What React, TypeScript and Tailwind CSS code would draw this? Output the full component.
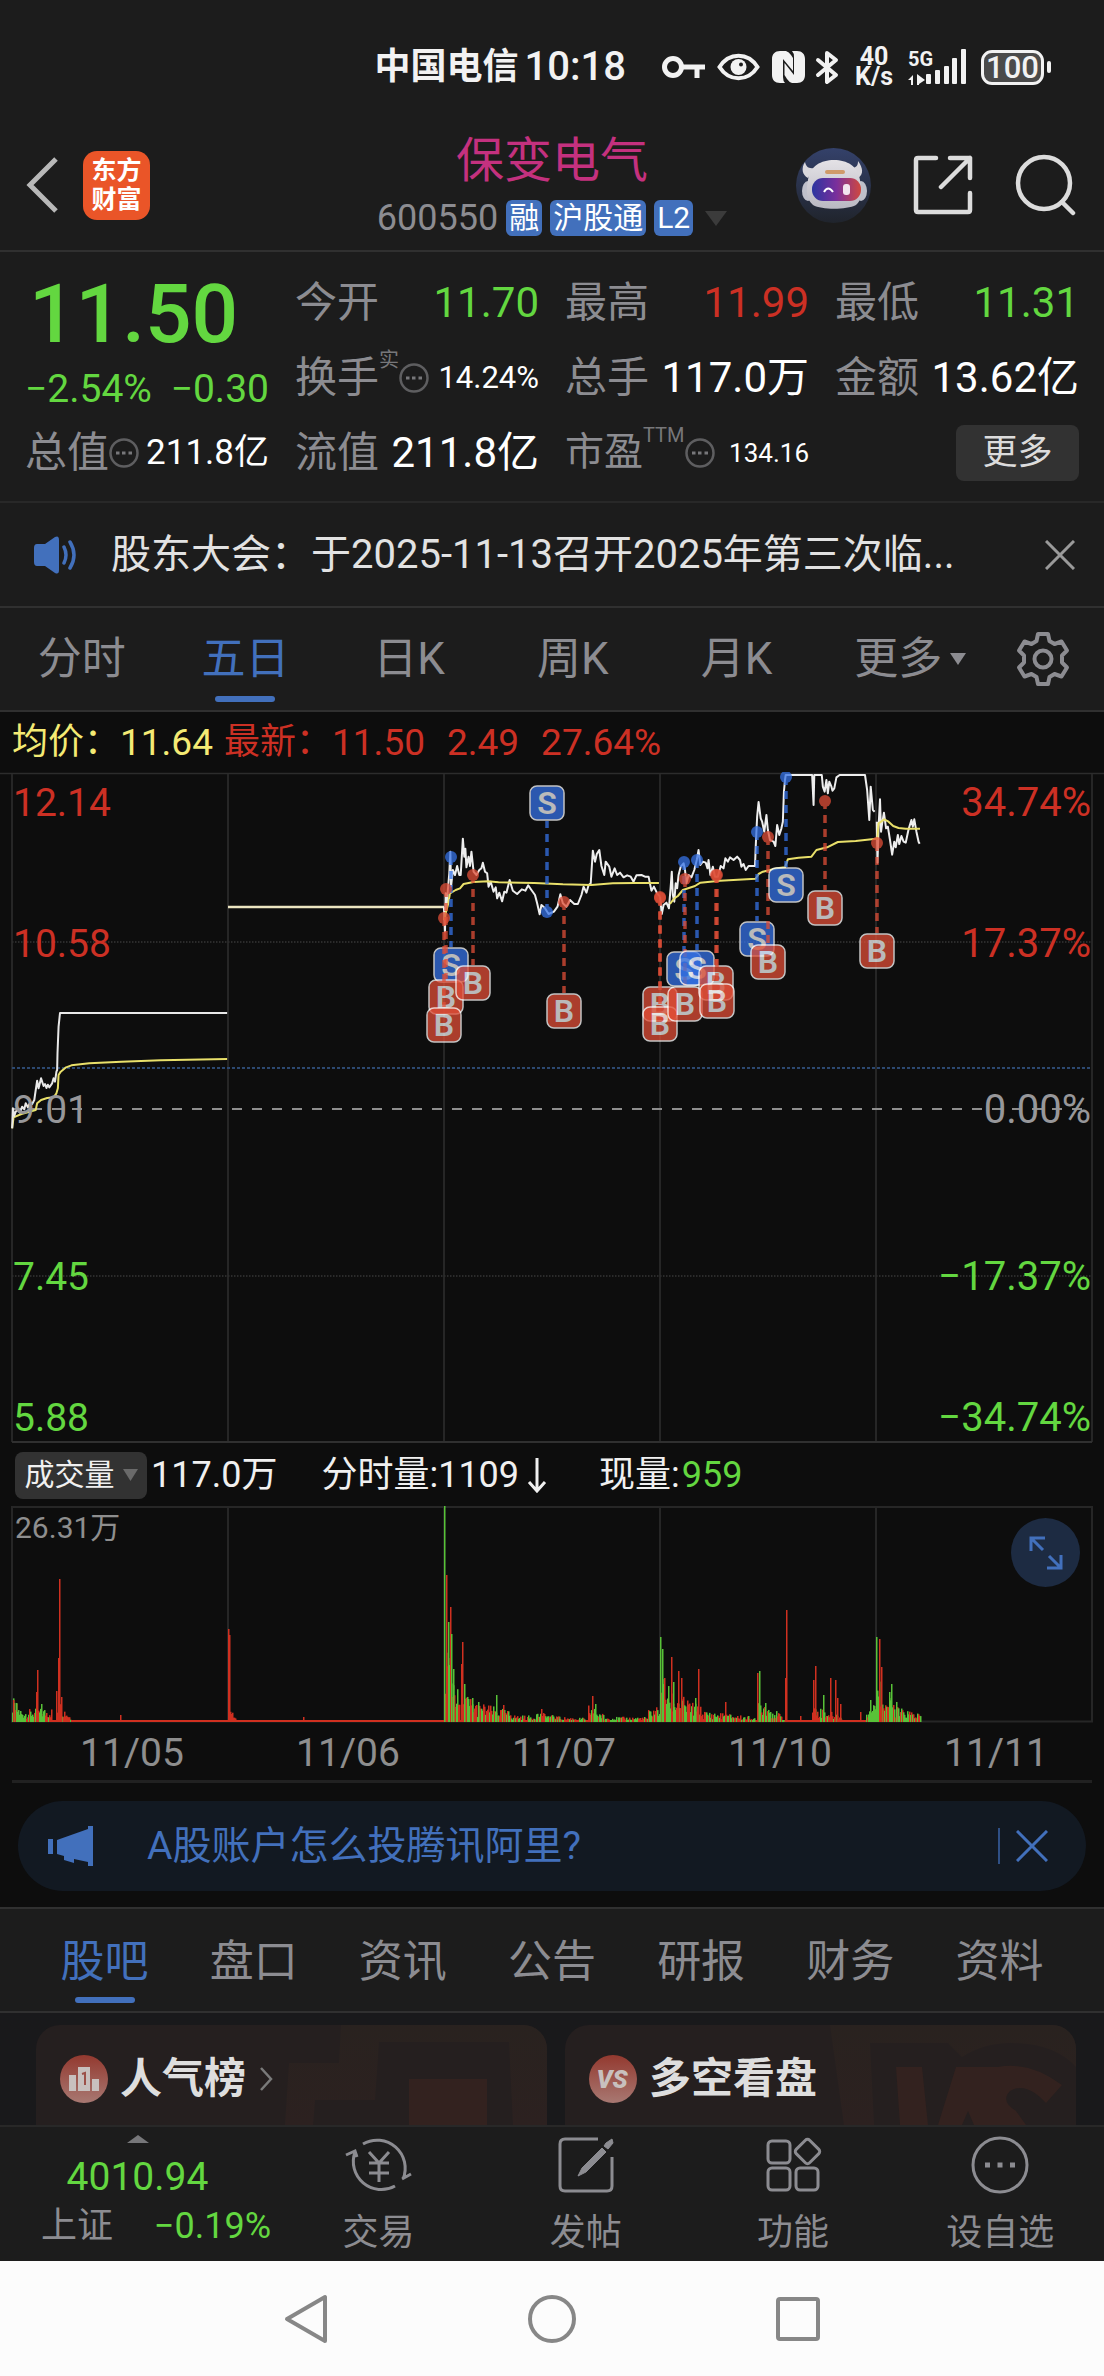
import React from "react";

const FONT = "font-[Roboto,'Noto_Sans_CJK_SC',sans-serif]";

/* ---------- status bar ---------- */

function StatusBar() {
  return (
    <div className="flex h-[134px] items-center justify-end pr-[53px] text-[#f2f2f2]">
      <span className="text-[36px] leading-none font-bold">中国电信</span>
      <span className="ml-1.5 text-[40px] leading-none font-medium">10:18</span>
      <svg className="ml-[35px] h-6 w-11" viewBox="0 0 44 24" fill="none" stroke="currentColor" strokeWidth="5">
        <circle cx="12" cy="12" r="8.5" />
        <path d="M20 12H44M36 12V23" />
      </svg>
      <svg className="ml-3 h-7 w-[43px]" viewBox="0 0 43 28">
        <path d="M2.5 14C12-1 31-1 40.500 14C31 29 12 29 2.500 14Z" fill="none" stroke="currentColor" strokeWidth="4" />
        <circle cx="21.500" cy="14" r="8" fill="currentColor" />
        <circle cx="24" cy="11.500" r="2" fill="#1c1c1c" />
      </svg>
      <svg className="ml-3 h-8 w-[33px]" viewBox="0 0 33 32">
        <path d="M8 0H14Q17 1 19 4L21 7V20L11 8V26Q11 30 13 32H8C3 32 0 29 0 24V8C0 3 3 0 8 0Z" fill="currentColor" />
        <path d="M20 0H25C30 0 33 3 33 8V24C33 29 30 32 25 32H20Q17 31 15 28L12.500 24V12L22 24V6Q22 2 20 0Z" fill="currentColor" />
      </svg>
      <svg className="ml-[10px] h-[35px] w-[24px]" viewBox="0 0 24 35" fill="none" stroke="currentColor" strokeWidth="4" strokeLinejoin="round" strokeLinecap="round">
        <path d="M3 10L21 25L12 32V3L21 10L3 25" />
      </svg>
      <span className="ml-4 flex flex-col items-center text-[25px] leading-5 font-bold">
        <span>40</span>
        <span>K/s</span>
      </span>
      <span className="ml-[15px] flex h-9 items-end">
        <span className="flex h-9 w-6 flex-col items-start justify-between">
          <span className="text-[20px] leading-5 font-bold">5G</span>
          <svg className="h-[11px] w-[17px]" viewBox="0 0 17 11" fill="currentColor">
            <path d="M0 6L5 1V11H3V6ZM9 0L17 6L11 10V11H9Z" />
          </svg>
        </span>
        <svg className="-ml-1.5 h-9 w-[41px]" viewBox="18 0 41 36" fill="currentColor">
          <rect x="18" y="25" width="5" height="10" rx="1" />
          <rect x="27" y="21" width="5" height="14" rx="1" />
          <rect x="36" y="17" width="5" height="18" rx="1" />
          <rect x="44" y="9" width="5" height="26" rx="1" />
          <rect x="53" y="0" width="5" height="35" rx="1" />
        </svg>
      </span>
      <span className="ml-[14px] flex h-[35px] w-[63px] items-center justify-center rounded-[11px] border-[3px] border-current bg-[#4a4a4a] text-[31px] leading-none font-medium">
        100
      </span>
      <span className="ml-[3px] h-3 w-1 rounded-full bg-current" />
    </div>
  );
}

/* ---------- title bar ---------- */

function Robot() {
  return (
    <svg className="h-[75px] w-[75px]" viewBox="0 0 75 75">
      <defs>
        <linearGradient id="sky" x1="0" y1="0" x2="0" y2="1">
          <stop offset="0" stopColor="#34416a" />
          <stop offset="1" stopColor="#20242c" />
        </linearGradient>
        <linearGradient id="visor" x1="0" y1="0" x2="1" y2="0">
          <stop offset="0" stopColor="#2b35a0" />
          <stop offset="0.5" stopColor="#7a2f9c" />
          <stop offset="1" stopColor="#d0493f" />
        </linearGradient>
        <linearGradient id="shell" x1="0" y1="0" x2="0" y2="1">
          <stop offset="0" stopColor="#e4e2e6" />
          <stop offset="1" stopColor="#b9b8c2" />
        </linearGradient>
      </defs>
      <circle cx="37.500" cy="37.500" r="37.500" fill="url(#sky)" />
      <path d="M9 14C5 20 6 27 12 30L18 20C12 21 10 18 9 14ZM62 13C67 20 68 26 62 30L55 20C61 20 62 17 62 13Z" fill="#d9d7dc" />
      <ellipse cx="12" cy="43" rx="6" ry="10" fill="#bfc0cb" />
      <ellipse cx="65" cy="43" rx="6" ry="10" fill="#bfc0cb" />
      <path d="M12 32C14 18 25 12 38 12S62 18 64 32C66 44 66 52 60 57C50 62 26 62 17 57C10 51 10 42 12 32Z" fill="url(#shell)" />
      <rect x="29" y="22" width="20" height="4" rx="2" fill="#cf9a6a" />
      <rect x="16" y="30" width="49" height="23" rx="11" fill="url(#visor)" />
      <path d="M28 44Q32 37 37 44" fill="none" stroke="#fff" strokeWidth="2" />
      <rect x="47" y="36" width="7" height="11" rx="3" fill="#f2e4ee" />
    </svg>
  );
}

function TitleBar() {
  return (
    <header className="grid grid-cols-[1fr_auto_1fr] items-start border-b-2 border-[#303030] pb-[14px]">
      <div className="flex h-[102px] items-center pl-6">
        <button aria-label="返回">
          <svg className="h-[58px] w-[36px]" viewBox="0 0 36 58" fill="none" stroke="#b8b8b8" strokeWidth="5">
            <path d="M32 3L6 29L32 55" />
          </svg>
        </button>
        <div className="ml-[23px] flex h-[69px] w-[67px] flex-col items-center justify-center rounded-[14px] bg-[#ea5528] text-[25px] leading-[29px] font-bold text-white">
          <span>东方</span>
          <span>财富</span>
        </div>
      </div>
      <div className="flex flex-col items-center gap-3">
        <h1 className="text-[48px] leading-[54px] text-[#c4317f]">保变电气</h1>
        <button className="flex h-9 items-center gap-2 text-[30px] leading-none text-white">
          <span className="text-[36px] text-[#8c8c91]">600550</span>
          <span className="rounded-md bg-[#4270bc] px-[3px] py-[3px]">融</span>
          <span className="rounded-md bg-[#4270bc] px-[3px] py-[3px]">沪股通</span>
          <span className="rounded-md bg-[#4270bc] px-[3px] py-[3px]">L2</span>
          <svg className="ml-1 h-[15px] w-[22px]" viewBox="0 0 22 15">
            <path d="M0 0H22L11 15Z" fill="#3b3b3b" />
          </svg>
        </button>
      </div>
      <div className="flex h-[102px] items-center justify-end gap-[42px] pr-[27px]">
        <button aria-label="助手"><Robot /></button>
        <button aria-label="分享">
          <svg className="h-[60px] w-[60px]" viewBox="0 0 60 60" fill="none" stroke="#dcdcdc" strokeWidth="4.500" strokeLinecap="round" strokeLinejoin="round">
            <path d="M23 3H5Q3 3 3 5V55Q3 57 5 57H55Q57 57 57 55V38M37 3H57V23M57 3L28 32" />
          </svg>
        </button>
        <button aria-label="搜索">
          <svg className="h-[62px] w-[62px]" viewBox="0 0 62 62" fill="none" stroke="#dcdcdc" strokeWidth="4.500" strokeLinecap="round">
            <circle cx="29" cy="29" r="26" />
            <path d="M47 48L58 59" />
          </svg>
        </button>
      </div>
    </header>
  );
}

/* ---------- quote summary ---------- */

const GREEN = "text-[#63d740]";
const RED = "text-[#cc3024]";

function Dots() {
  return (
    <svg className="h-[30px] w-[30px] shrink-0" viewBox="0 0 30 30">
      <circle cx="15" cy="15" r="13.500" fill="none" stroke="#5e5e60" strokeWidth="2.500" />
      <path d="M7 13.500h3.500v3H7zM13 13.500h3.500v3H13zM19.500 13.500H23v3h-3.500z" fill="#77777a" />
    </svg>
  );
}

type StatProps = { label: string; value: string; color?: string; size?: string; sup?: string; dots?: boolean };

function Stat({ label, value, color = "text-white", size = "text-[42px]", sup, dots }: StatProps) {
  return (
    <div className="flex h-[75px] items-center leading-none whitespace-nowrap">
      <span className={(sup === "TTM" ? "text-[39px]" : "text-[42px]") + " text-[#8c8c91]"}>{label}</span>
      {sup && <span className="mb-9 text-[20px] text-[#77777a]">{sup}</span>}
      {dots && <Dots />}
      <span className={"ml-auto " + size + " " + color}>{value}</span>
    </div>
  );
}

function Summary() {
  return (
    <section className="grid grid-cols-4 gap-x-[26px] border-b-2 border-[#282828] px-[25px] pt-[13px] pb-[11px]">
      <div className="row-span-2 flex h-[150px] flex-col leading-none whitespace-nowrap">
        <div className={"pl-1 text-[82px] leading-[98px] font-medium " + GREEN}>11.50</div>
        <div className={"flex justify-between text-[39px] leading-[52px] " + GREEN}>
          <span>−2.54%</span>
          <span>−0.30</span>
        </div>
      </div>
      <Stat label="今开" value="11.70" color={GREEN} />
      <Stat label="最高" value="11.99" color={RED} />
      <Stat label="最低" value="11.31" color={GREEN} />
      <Stat label="换手" value="14.24%" size="text-[31px]" sup="实" dots />
      <Stat label="总手" value="117.0万" />
      <Stat label="金额" value="13.62亿" />
      <Stat label="总值" value="211.8亿" size="text-[35px]" dots />
      <Stat label="流值" value="211.8亿" />
      <Stat label="市盈" value="134.16" size="text-[26px]" sup="TTM" dots />
      <div className="flex h-[75px] items-center justify-end">
        <button className="h-14 w-[123px] rounded-lg bg-[#323232] text-[35px] leading-none text-[#dcdcdc]">更多</button>
      </div>
    </section>
  );
}

/* ---------- notice and period tabs ---------- */

function Notice() {
  return (
    <div className="flex h-[105px] items-center border-b-2 border-[#303030] pr-[29px] pl-[33px]">
      <svg className="h-[38px] w-[46px] shrink-0" viewBox="0 0 46 38" fill="#4270bc">
        <path d="M4 8H12L22 1Q26 -1 26 4V34Q26 39 22 37L12 30H4Q1 30 1 26V12Q1 8 4 8Z" />
        <path d="M31 11Q35 19 31 27M37 6Q45 19 37 32" fill="none" stroke="#4270bc" strokeWidth="3.500" strokeLinecap="round" />
      </svg>
      <a href="#notice" className="ml-8 min-w-0 flex-1 text-[40px] leading-none whitespace-nowrap text-[#e2e2e2]">
        股东大会：于2025-11-13召开2025年第三次临...
      </a>
      <button aria-label="关闭">
        <svg className="h-[30px] w-[30px]" viewBox="0 0 30 30" stroke="#9a9a9a" strokeWidth="3">
          <path d="M1 1L29 29M29 1L1 29" />
        </svg>
      </button>
    </div>
  );
}

function PeriodTabs() {
  const tabs = ["分时", "五日", "日K", "周K", "月K", "更多"];
  return (
    <nav className="flex h-[104px] items-center border-b-2 border-[#303030]">
      <div className="grid h-full flex-1 grid-cols-6">
        {tabs.map((t) => {
          const on = t === "五日";
          return (
            <button
              key={t}
              className={"relative flex h-full items-center justify-center text-[44px] leading-none whitespace-nowrap " + (on ? "text-[#4270bc]" : "text-[#8c8c91]") + (t === "更多" ? " pl-5" : "")}
            >
              {t}
              {t === "更多" && (
                <svg className="ml-2 h-3 w-4 shrink-0" viewBox="0 0 16 12">
                  <path d="M0 0H16L8 12Z" fill="currentColor" />
                </svg>
              )}
              {on && <span className="absolute bottom-2 h-1.5 w-[60px] rounded-full bg-[#4270bc]" />}
            </button>
          );
        })}
      </div>
      <button aria-label="设置" className="flex w-[122px] justify-center">
        <svg className="h-[54px] w-[54px]" viewBox="0 0 54 54" fill="none" stroke="#8c8c91" strokeWidth="4" strokeLinejoin="round">
          <path d="M22 2H32L33.500 9L38.500 12L45.500 9.500L51 18.500L46 23.500V30.500L51 35.500L45.500 44.500L38.500 42L33.500 45L32 52H22L20.500 45L15.500 42L8.500 44.500L3 35.500L8 30.500V23.500L3 18.500L8.500 9.500L15.500 12L20.500 9Z" />
          <circle cx="27" cy="27" r="8.500" />
        </svg>
      </button>
    </nav>
  );
}

/* ---------- price chart ---------- */

const DAY1_PRICE =
  "34,1105 36,1045 40,1068 44,1055 50,1050 56,1058 62,1040 68,1048 72,1030 78,1042 84,1028 90,1032 96,1020 98,1005 104,962 108,985 115,955 122,978 126,972 130,984 134,974 138,982 146,970 150,955 154,965 158,935 160,930 161,880 164,800 168,759 636,759";
const DAY1_AVG =
  "34,1105 38,1072 60,1062 100,1050 104,1030 115,1020 132,1014 150,1012 158,1000 162,985 164,945 170,935 185,922 200,916 250,910 340,905 450,901 636,897";
const DAY3_PRICE =
  "67,440 70,515 72,400 75,440 78,390 82,340 85,275 87,380 92,330 98,345 104,318 110,345 114,345 120,236 124,290 127,266 130,322 136,290 140,318 144,275 150,335 158,345 166,330 172,325 176,308 182,335 188,340 192,380 198,365 206,395 212,382 216,415 222,398 230,424 236,395 242,398 251,360 260,392 272,402 285,388 295,392 303,376 312,390 322,405 328,430 335,463 340,435 350,445 360,462 375,455 385,440 393,403 400,430 410,440 420,420 432,432 442,432 452,405 458,380 466,398 472,376 478,370 484,272 490,305 495,282 502,270 508,318 516,345 520,305 530,320 536,350 545,325 552,345 560,338 570,352 580,346 590,350 598,365 606,346 620,345 630,350 640,350 648,392 655,380 664,400 672,410";
const DAY3_AVG =
  "67,480 78,435 84,400 100,390 112,385 122,372 150,366 190,364 220,367 320,369 400,373 480,375 540,370 600,369 669,369";
const DAY4_PRICE =
  "672,410 677,462 682,435 690,428 697,445 702,380 705,335 708,405 712,425 716,370 720,385 724,345 730,320 738,310 742,330 746,370 752,345 760,352 768,330 775,300 780,270 785,315 792,305 800,308 805,325 808,300 813,345 820,320 826,350 834,350 842,318 850,325 855,295 862,305 868,292 878,300 888,290 896,300 900,320 906,312 912,330 920,318 930,318 938,318 940,260 944,170 948,126 954,175 958,185 964,215 970,165 974,210 980,240 990,245 995,258 1000,195 1006,225 1012,205 1016,185 1019,95 1022,60 1024,45 1098,45 1102,135 1104,45 1125,45 1128,80 1133,95 1138,60 1142,100 1146,65 1152,80 1155,92 1160,85 1166,52 1175,45 1246,45 1252,90 1258,180 1262,80 1268,150 1273,155";
const DAY4_AVG =
  "700,432 712,415 722,408 736,390 770,378 785,368 840,362 940,356 948,342 960,335 1000,325 1022,322 1030,298 1060,293 1096,290 1110,270 1140,262 1170,246 1220,243 1277,236";
const DAY5_PRICE =
  "1279,185 1281,308 1284,200 1288,118 1291,215 1294,190 1299,158 1305,205 1310,200 1316,240 1322,284 1328,245 1332,262 1338,225 1342,252 1348,228 1354,245 1360,248 1368,208 1376,180 1380,200 1384,178 1390,215 1396,245 1399,251";
const DAY5_AVG = "1280,240 1284,190 1300,178 1312,185 1325,198 1340,204 1360,206 1400,206";

/* kind, x, trade point y, tag centre y */
const TRADES: [string, number, number, number][] = [
  ["S", 451, 857, 965],
  ["B", 446, 889, 997],
  ["B", 444, 918, 1025],
  ["B", 473, 875, 983],
  ["S", 547, 912, 803],
  ["B", 564, 902, 1011],
  ["B", 660, 897, 1004],
  ["B", 660, 898, 1024],
  ["S", 684, 862, 969],
  ["B", 685, 879, 1004],
  ["S", 697, 860, 968],
  ["B", 716, 875, 983],
  ["B", 717, 875, 1001],
  ["S", 757, 832, 939],
  ["B", 768, 837, 962],
  ["S", 786, 777, 885],
  ["B", 825, 801, 908],
  ["B", 877, 843, 951],
];

function Line({ points, color }: { points: string; color: string }) {
  return (
    <polyline points={points} fill="none" stroke={color} strokeWidth="2" strokeLinejoin="round" vectorEffect="non-scaling-stroke" />
  );
}

function PriceChart() {
  const axis: [string, string, number, string][] = [
    ["12.14", "34.74%", 816, "#cc3024"],
    ["10.58", "17.37%", 957, "#cc3024"],
    ["9.01", "0.00%", 1123, "#97979a"],
    ["7.45", "−17.37%", 1290, "#63d740"],
    ["5.88", "−34.74%", 1431, "#63d740"],
  ];
  return (
    <svg className="block h-auto w-full" viewBox="0 772 1104 672">
      <path d="M0 773.500H1104" stroke="#2c2c2c" strokeWidth="1.500" />
      <path d="M12 774V1442M228 774V1442M444 774V1442M660 774V1442M876 774V1442M1092 774V1442" stroke="#262626" strokeWidth="2" />
      <path d="M12 1442H1092" stroke="#303030" strokeWidth="2" />
      <path d="M12 942H1092M12 1276H1092" stroke="#2b2b2b" strokeWidth="2" strokeDasharray="1.500 1.500" />
      <path d="M12 1068H1092" stroke="#2c4870" strokeWidth="2" strokeDasharray="3 2" />
      <path d="M12 1109H1092" stroke="#8e8e8e" strokeWidth="2" strokeDasharray="10 10" />
      <g transform="translate(0 760) scale(0.35714 0.33333)">
        <Line points={DAY1_AVG} color="#e9e06a" />
        <Line points={DAY1_PRICE} color="#e8e8e8" />
      </g>
      <path d="M228 907H444" stroke="#ebe4c0" strokeWidth="2.500" />
      <g transform="translate(420 760) scale(0.35714 0.33333)">
        <Line points={DAY3_PRICE} color="#eeeeee" />
        <Line points={DAY3_AVG} color="#e9e06a" />
        <Line points={DAY4_PRICE} color="#eeeeee" />
        <Line points={DAY4_AVG} color="#e9e06a" />
        <Line points={DAY5_PRICE} color="#eeeeee" />
        <Line points={DAY5_AVG} color="#e9e06a" />
      </g>
      {axis.map(([left, right, y, fill]) => (
        <g key={left} fill={fill}>
          <text x="13" y={y} fontSize="39">{left}</text>
          <text x="1091" y={y} fontSize="40" textAnchor="end">{right}</text>
        </g>
      ))}
      {TRADES.map(([kind, x, point, tag], i) => {
        const fill = kind === "S" ? "#3572e6" : "#e04e37";
        return (
          <g key={i} opacity="0.75">
            <path d={`M${x} ${point}V${tag > point ? tag - 18 : tag + 18}`} stroke={fill} strokeWidth="3.500" strokeDasharray="8 6" />
            <circle cx={x} cy={point} r="6" fill={fill} />
            <rect x={x - 17} y={tag - 17} width="34" height="34" rx="7" fill={fill} stroke="#fff" strokeWidth="1.500" />
            <text x={x} y={tag + 11} textAnchor="middle" fontSize="32" fontWeight="600" fill="#f4f4f4">
              {kind}
            </text>
          </g>
        );
      })}
    </svg>
  );
}

/* ---------- volume chart ---------- */

/* x start, x end, start height, end height, share of green bars */
const VOLUME_BANDS: [number, number, number, number, number][] = [
  [12, 22, 24, 10, 0.5],
  [22, 52, 12, 14, 0.35],
  [57, 72, 24, 3, 0.2],
  [230, 236, 18, 2, 0],
  [445, 460, 90, 18, 0.5],
  [461, 482, 32, 14, 0.6],
  [482, 512, 18, 10, 0.55],
  [512, 585, 7, 4, 0.5],
  [536, 560, 10, 5, 0.5],
  [588, 604, 17, 7, 0.5],
  [604, 648, 5, 5, 0.5],
  [648, 660, 12, 18, 0.7],
  [661, 676, 46, 22, 0.55],
  [676, 702, 28, 14, 0.5],
  [702, 755, 11, 5, 0.5],
  [757, 784, 26, 4, 0.6],
  [812, 842, 17, 6, 0.3],
  [866, 876, 13, 26, 0.6],
  [877, 884, 60, 28, 0.5],
  [884, 898, 28, 14, 0.6],
  [898, 921, 14, 8, 0.65],
];

const VOLUME_PEAKS: [number, number, string][] = [
  [13, 22, "r"], [16, 19, "g"], [36, 30, "r"], [37, 52, "r"], [41, 18, "g"], [56, 31, "r"], [58, 64, "r"], [59, 143, "r"], [61, 25, "r"],
  [120, 7, "r"], [228, 93, "r"], [229, 87, "r"], [303, 5, "r"], [444, 216, "g"], [446, 147, "r"], [448, 100, "g"],
  [450, 115, "r"], [451, 88, "g"], [453, 53, "g"], [461, 58, "r"], [462, 80, "r"], [464, 38, "g"], [472, 24, "g"],
  [478, 20, "g"], [496, 27, "g"], [503, 17, "r"], [541, 13, "r"], [592, 26, "r"], [595, 18, "g"], [660, 85, "g"], [662, 73, "g"],
  [664, 44, "r"], [671, 65, "r"], [673, 40, "g"], [678, 51, "r"], [681, 44, "r"], [695, 24, "g"], [698, 53, "r"],
  [725, 20, "r"], [757, 49, "r"], [759, 51, "g"], [765, 19, "g"], [785, 44, "r"], [786, 112, "r"], [800, 6, "r"], [813, 42, "r"],
  [815, 56, "r"], [823, 27, "g"], [830, 44, "r"], [835, 42, "r"], [837, 24, "r"], [840, 18, "r"], [860, 10, "r"],
  [870, 22, "g"], [876, 85, "g"], [879, 83, "r"], [881, 55, "r"], [889, 30, "g"], [891, 38, "g"], [896, 20, "g"],
];

function noise(n: number) {
  const v = Math.sin(n * 12.9898) * 43758.5453;
  return v - Math.floor(v);
}

const VOLUME_BARS: [number, number, string][] = [];
VOLUME_BANDS.forEach(([from, to, start, end, green], band) => {
  for (let x = from; x < to; x += 1) {
    const height = start + ((end - start) * (x - from)) / (to - from);
    VOLUME_BARS.push([x, Math.max(2, height * (0.25 + 0.8 * noise(x + band))), noise(x * 3 + 7) < green ? "g" : "r"]);
  }
});
VOLUME_BARS.push(...VOLUME_PEAKS);

function VolumeChart() {
  return (
    <div className="relative">
      <svg className="block h-auto w-full" viewBox="0 1506 1104 217">
        <path d="M12 1507H1092V1721.500H12ZM228 1507V1722M444 1507V1722M660 1507V1722M876 1507V1722" fill="none" stroke="#262626" strokeWidth="2" />
        <path d="M12 1721H920" stroke="#d03020" strokeWidth="2" />
        {VOLUME_BARS.map(([x, h, c], i) => (
          <rect key={i} x={x} y={1722 - h} width="1.500" height={h} fill={c === "g" ? "#58c238" : "#d03020"} />
        ))}
        <text x="15" y="1538" fontSize="30" fill="#8e8e8e">26.31万</text>
      </svg>
      <button aria-label="全屏" className="absolute top-3 right-6 flex h-[69px] w-[69px] items-center justify-center rounded-full bg-[#1d2b42]">
        <svg className="h-[34px] w-[34px]" viewBox="0 0 34 34" fill="none" stroke="#4270bc" strokeWidth="3">
          <path d="M2 15V2H16M2 2L14 14M32 19V32H18M32 32L20 20" />
        </svg>
      </button>
    </div>
  );
}

function ChartPanel() {
  return (
    <section className="bg-[#0d0d0d]">
      <div className="flex h-[60px] items-center pl-3 text-[36px] leading-none whitespace-nowrap">
        <span className="flex items-center text-[#f4ea74]">
          均价：<span className="w-[104px] text-[37px]">11.64</span>
        </span>
        <span className={"flex items-center " + RED}>
          最新：<span className="flex gap-[22px] text-[37px]"><span>11.50</span><span>2.49</span><span>27.64%</span></span>
        </span>
      </div>
      <PriceChart />
      <div className="flex h-[62px] items-center pl-[15px] text-[36px] leading-none whitespace-nowrap text-[#f0f0f0]">
        <button className="flex h-[47px] w-[132px] items-center justify-center gap-2 rounded-lg bg-[#323232] text-[30px]">
          成交量
          <svg className="h-3 w-[15px]" viewBox="0 0 15 12">
            <path d="M0 0H15L7.500 12Z" fill="#6a6a6a" />
          </svg>
        </button>
        <span className="ml-1">117.0万</span>
        <span className="ml-11 flex items-center">
          分时量:1109
          <svg className="ml-2 h-9 w-5" viewBox="0 0 20 36" fill="none" stroke="currentColor" strokeWidth="3">
            <path d="M10 1V34M2 25L10 34L18 25" />
          </svg>
        </span>
        <span className="ml-[52px] flex items-center">现量:<span className={"ml-0.5 " + GREEN}>959</span></span>
      </div>
      <VolumeChart />
      <div className="grid h-[57px] grid-cols-5 items-center pt-1 pl-6 text-center text-[39px] leading-none text-[#8e8e8e]">
        {["11/05", "11/06", "11/07", "11/10", "11/11"].map((d) => (
          <span key={d}>{d}</span>
        ))}
      </div>
      <div className="mx-3 h-[3px] bg-[#212121]" />
      <div className="px-[18px] pt-[18px] pb-4">
        <div className="flex h-[90px] items-center rounded-full bg-[#121922] pr-[38px] pl-[30px] text-[#4270bc]">
          <svg className="h-10 w-[46px] shrink-0" viewBox="0 0 46 40" fill="currentColor">
            <path d="M0 13H5V28H0ZM9 14L40 3V0H45V40H40V36L26 33V37L16 34V30L9 28Z" />
          </svg>
          <a href="#promo" className="ml-[53px] flex-1 text-[39px] leading-none whitespace-nowrap">A股账户怎么投腾讯阿里?</a>
          <span className="h-9 w-0.5 bg-[#2f5086]" />
          <button aria-label="关闭" className="ml-4">
            <svg className="h-8 w-8" viewBox="0 0 32 32" stroke="currentColor" strokeWidth="3">
              <path d="M1 1L31 31M31 1L1 31" />
            </svg>
          </button>
        </div>
      </div>
    </section>
  );
}

/* ---------- content tabs and cards ---------- */

function ContentTabs() {
  const tabs = ["股吧", "盘口", "资讯", "公告", "研报", "财务", "资料"];
  return (
    <nav className="flex h-[106px] items-center border-y-2 border-[#303030] px-[30px]">
      {tabs.map((t, i) => (
        <button
          key={t}
          className={"relative flex h-full flex-1 items-center justify-center pt-1 text-[44px] leading-none " + (i === 0 ? "text-[#4270bc]" : "text-[#8c8c91]")}
        >
          {t}
          {i === 0 && <span className="absolute bottom-2 h-1.5 w-[60px] rounded-full bg-[#4270bc]" />}
        </button>
      ))}
    </nav>
  );
}

function Badge({ children }: { children: React.ReactNode }) {
  return (
    <svg className="relative h-12 w-12" viewBox="0 0 48 48">
      <defs>
        <linearGradient id="badge" x1="0" y1="0" x2="0" y2="1">
          <stop offset="0" stopColor="#93392f" />
          <stop offset="1" stopColor="#a87872" />
        </linearGradient>
      </defs>
      <circle cx="24" cy="24" r="24" fill="url(#badge)" />
      {children}
    </svg>
  );
}

function Cards() {
  const card = "relative flex h-[100px] flex-1 items-center overflow-hidden rounded-t-[24px] bg-[#251f1f] pt-2 pl-6 text-[42px] leading-none font-bold text-[#dedede]";
  return (
    <section className="flex gap-[18px] bg-[#19191b] pt-3 pr-7 pl-9">
      <a href="#rank" className={card}>
        <svg className="absolute top-0 right-0 h-[100px] w-[300px]" viewBox="0 0 300 100">
          <defs>
            <linearGradient id="glow" x1="0" y1="0" x2="0" y2="1">
              <stop offset="0" stopColor="#29221f" />
              <stop offset="1" stopColor="#2c2120" />
            </linearGradient>
          </defs>
          <path d="M94 0H300V100H266L262 17H132L128 75H68L66 100H38L42 38H92Z" fill="url(#glow)" />
          <path d="M162 54H240V100H162Z" fill="#33221f" />
        </svg>
        <Badge>
          <path d="M9 20H16V36H9ZM18 12H30V36H18ZM32 24H39V36H32Z" fill="#c8c0be" />
          <path d="M22 19L25 18V30" fill="none" stroke="#9c5048" strokeWidth="2" />
        </Badge>
        <span className="relative ml-3">人气榜</span>
        <svg className="relative ml-3 h-6 w-4" viewBox="0 0 16 24" fill="none" stroke="#7a7a7a" strokeWidth="2.500">
          <path d="M3 1L13 12L3 23" />
        </svg>
      </a>
      <a href="#versus" className={card}>
        <svg className="absolute top-0 right-0 h-[100px] w-[246px]" viewBox="0 0 246 100">
          <path d="M0 0H246V42Q224 18 180 18Q154 18 132 32L118 18H40L44 100H14Z" fill="url(#glow)" />
          <path d="M66 42H92L98 100H70ZM126 42H168Q200 36 232 60L216 78Q196 56 180 66Q170 76 186 86L196 100H144L138 86L132 100H108Z" fill="#33221f" />
        </svg>
        <Badge>
          <text x="23" y="33" textAnchor="middle" fontSize="25" fontWeight="900" fontStyle="italic" fill="#c8c0be">VS</text>
        </Badge>
        <span className="relative ml-3">多空看盘</span>
      </a>
    </section>
  );
}

/* ---------- bottom bars ---------- */

function Action({ label, children }: { label: string; children: React.ReactNode }) {
  return (
    <button className="flex flex-1 flex-col items-center gap-[14px] pt-2 text-[36px] leading-[48px] text-[#8c8c91]">
      <svg className="h-[60px] w-[68px]" viewBox="0 0 68 60" fill="none" stroke="currentColor" strokeWidth="3">
        {children}
      </svg>
      {label}
    </button>
  );
}

function BottomBar() {
  return (
    <div className="flex h-[136px] border-t-2 border-[#282828]">
      <div className="flex w-[275px] flex-col items-center pt-2 whitespace-nowrap">
        <svg className="h-2 w-[22px]" viewBox="0 0 22 8">
          <path d="M0 8L11 0L22 8Z" fill="#77777a" />
        </svg>
        <span className={"mt-[10px] text-[39px] leading-[48px] " + GREEN}>4010.94</span>
        <span className="flex w-full items-center justify-between pr-1 pl-[41px] text-[36px] leading-[50px] text-[#8c8c91]">
          上证<span className={GREEN}>−0.19%</span>
        </span>
      </div>
      <Action label="交易">
        <path d="M18 9A28 28 0 0 1 58 44M50 51A28 28 0 0 1 10 17M1 20L10 16L12 22M57 44L66 39" />
        <path d="M24 17L34 28L44 17M24 28H44M24 38H44M34 28V47" />
      </Action>
      <Action label="发帖">
        <path d="M46 4H13Q8 4 8 9V51Q8 56 13 56H55Q60 56 60 51V22" />
        <path d="M54 8L60 4L61 8L56 14L52 11ZM50 13L54 17L34 37L26 41L30 33Z" fill="currentColor" strokeWidth="1" />
      </Action>
      <Action label="功能">
        <rect x="9" y="6" width="22" height="22" rx="4" />
        <rect x="9" y="33" width="22" height="22" rx="4" />
        <rect x="37" y="33" width="22" height="22" rx="4" />
        <rect x="39" y="7" width="19" height="19" rx="3" transform="rotate(45 48.500 16.500)" />
      </Action>
      <Action label="设自选">
        <circle cx="34" cy="30" r="27" />
        <path d="M19 30H24M31.500 30H36.500M44 30H49" strokeWidth="5" />
      </Action>
    </div>
  );
}

function SystemNav() {
  return (
    <div className="flex flex-1 items-center justify-center gap-[198px] bg-[#fcfcfc] pt-1 pb-1">
      <button aria-label="后退">
        <svg className="h-[50px] w-[46px]" viewBox="0 0 46 50" fill="none" stroke="#878787" strokeWidth="4" strokeLinejoin="round">
          <path d="M42 3V47L4 25Z" />
        </svg>
      </button>
      <button aria-label="主页">
        <svg className="h-[50px] w-[50px]" viewBox="0 0 50 50" fill="none" stroke="#878787" strokeWidth="4">
          <circle cx="25" cy="25" r="22" />
        </svg>
      </button>
      <button aria-label="最近">
        <svg className="h-[46px] w-[46px]" viewBox="0 0 46 46" fill="none" stroke="#878787" strokeWidth="4">
          <rect x="3" y="3" width="40" height="40" rx="2" />
        </svg>
      </button>
    </div>
  );
}

export default function App() {
  return (
    <div className={"flex min-h-screen flex-col bg-[#1c1c1c] " + FONT}>
      <StatusBar />
      <TitleBar />
      <Summary />
      <Notice />
      <PeriodTabs />
      <ChartPanel />
      <ContentTabs />
      <Cards />
      <BottomBar />
      <SystemNav />
    </div>
  );
}
